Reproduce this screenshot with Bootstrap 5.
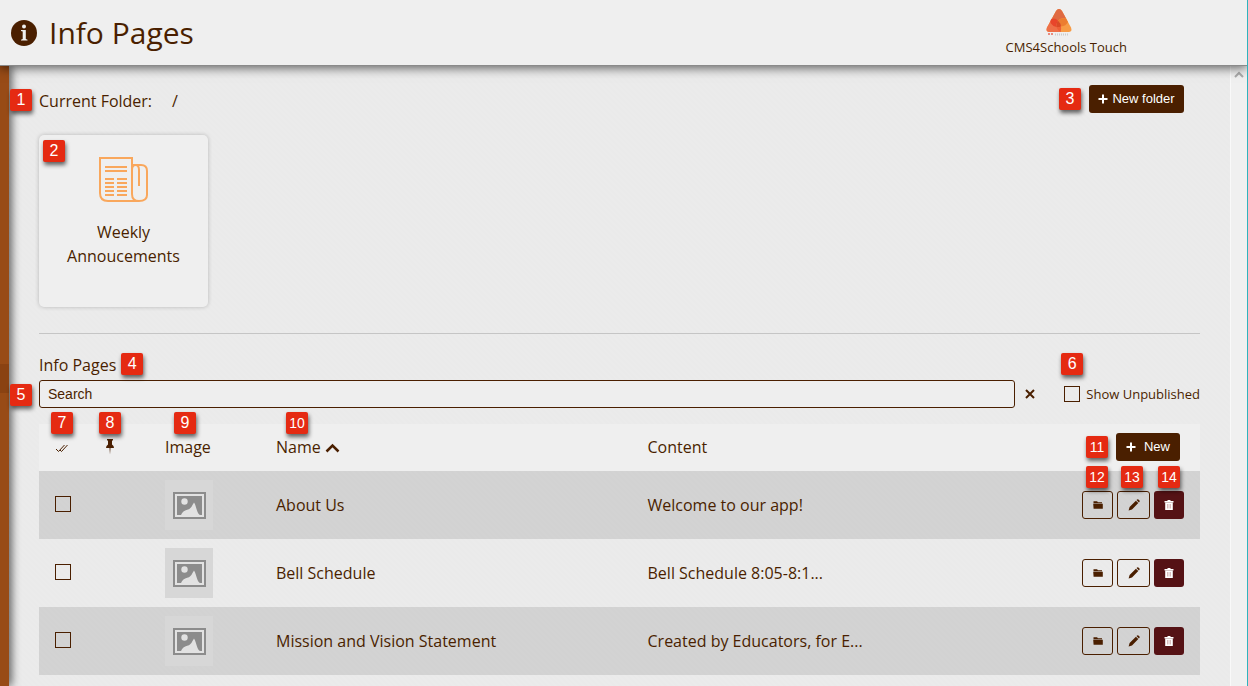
<!DOCTYPE html>
<html lang="en">
<head>
<meta charset="utf-8">
<meta name="viewport" content="width=device-width, initial-scale=1">
<title>Info Pages</title>
<link href="https://cdn.jsdelivr.net/npm/bootstrap@5.3.0/dist/css/bootstrap.min.css" rel="stylesheet">
<style>
  :root { --brown: #4a1f00; --rust: #984b16; --wine: #551215; }
  body {
    font: 16px/24px "Open Sans", "Noto Sans", sans-serif;
    color: var(--brown);
    background: repeating-linear-gradient(45deg, #ebebeb 0 2px, #eaeaea 2px 4px);
    border-right: 1px solid #2fb3bd;
    overflow: hidden;
  }
  .app-header { height: 66px; background: #efefef; border-bottom: 1px solid #8a8a8a; box-shadow: 0 2px 10px rgba(0,0,0,.6); z-index: 2; padding: 0 120px 0 11px; }
  .app-header h1 { font-size: 30px; line-height: 40px; font-weight: 400; }
  .brand-link { font-size: 13px; line-height: 18px; color: var(--brown); padding-bottom: 2px; }
  .brand-link svg { margin-right: 14px; }
  .side-rail { width: 9px; background: var(--rust); box-shadow: 2px 0 10px rgba(0,0,0,.7); padding-top: 298px; }
  .side-rail a { height: 29px; background: #8a4212; }
  .content-pane { padding: 19px 30px 0; }
  .scroll-gutter { width: 17px; background: #f0f0f0; border-left: 1px solid #f9f9f9; padding-top: 5px; }
  .ui-control { font-family: "Liberation Sans", Arial, sans-serif; font-size: 13px; line-height: 18px; height: 28px; border-radius: 3px; }
  .btn-brown { background: var(--brown); color: #fff; }
  .btn-line { border: 1px solid var(--brown); background: transparent; color: var(--brown); }
  .btn-wine { background: var(--wine); color: #fff; }
  .btn-brown:hover, .btn-wine:hover { background: var(--rust); color: #fff; }
  .row-actions { gap: 4px; }
  .row-actions .btn { display: flex; align-items: center; justify-content: center; }
  .btn-move { width: 31px; } .btn-edit { width: 33px; } .btn-trash { width: 30px; }
  .btn-new { width: 64px; } .btn-new-folder { width: 95px; }
  .folder-path { padding-left: 20px; }
  .callout-mark {
    font: 16px/22px "Liberation Sans", Arial, sans-serif;
    width: 22px; height: 22px; border-radius: 2px; text-align: center;
    background: #e52a12; color: #fff; box-shadow: 1px 3px 4px rgba(0,0,0,.6); z-index: 3;
  }
  .callout-mark.two-digit { font-size: 14px; }
  .mark-edge { left: -29px; top: 4px; }
  .mark-card { left: 4px; top: 5px; }
  .mark-head { top: -12px; left: 12px; }
  .mark-center-head { left: 10px; }
  .mark-image { left: 25px; }
  .mark-name { left: 26px; }
  .mark-above { left: 4px; top: -25px; }
  .folder-card { width: 169px; height: 172px; margin-top: 22px; padding: 21px 16px 0; background: #efefef; border-radius: 5px; box-shadow: 0 0 4px rgba(0,0,0,.22); color: var(--brown); }
  .divider { margin: 26px 0 0; border-color: #bbb; opacity: .8; }
  .section-head { margin-top: 19px; gap: 5px; }
  .section-head .callout-mark { margin-bottom: 2px; }
  .search-row { margin-top: 3px; }
  .search-box { border: 1px solid var(--brown); background: #eee; font-size: 14px; padding: 0 8px; color: var(--brown); }
  .search-box::placeholder { color: var(--brown); opacity: 1; }
  .clear-btn { width: 30px; }
  .tick { appearance: none; width: 16px; height: 16px; border: 1px solid var(--brown); background: transparent; margin: 0; flex: none; }
  .tick:checked { background: var(--brown); }
  .unpub { gap: 6px; margin-left: 19px; font-size: 13px; }
  .unpub .callout-mark { left: -3px; top: -29px; }
  .pages-table { table-layout: fixed; width: 100%; margin-top: 16px; }
  .pages-table th { font-weight: 400; height: 47px; background: #efefef; padding: 0 16px 2px; position: relative; }
  .pages-table td { height: 68px; padding: 0 16px; }
  .pages-table tbody .tick { margin-bottom: 2px; }
  .pages-table tbody tr:nth-child(odd) { background: rgba(0,0,0,.1); }
  .col-tick { width: 50px; } .col-pin { width: 60px; } .col-image { width: 111px; }
  .col-name { width: 32%; } .col-actions { width: 150px; }
  .thumb { width: 48px; height: 50px; background: #d7d7d7; }
</style>
</head>
<body class="d-flex flex-column vh-100">

<svg class="d-none" aria-hidden="true">
  <symbol id="i-plus" viewBox="0 0 10 10"><path d="M5 .5v9M.5 5h9" stroke="currentColor" stroke-width="2"/></symbol>
  <symbol id="i-folder" viewBox="0 0 10 10"><path d="M.5 1.2h3.6l.8 1H9v1H.5zM.2 3.8h9.6v5H.6z" fill="currentColor"/></symbol>
  <symbol id="i-pencil" viewBox="0 0 12 12"><path d="M.6 11.4l1-3.400 6.300-6.300 2.400 2.400-6.300 6.300zM8.500 1.100l.7-.6q.6-.4 1.200 0l1.100 1.100q.4.600 0 1.200l-.6.7z" fill="currentColor"/></symbol>
  <symbol id="i-trash" viewBox="0 0 10 10"><path d="M3.500 0h3v1H9.500v1.500H.5V1h3z" fill="currentColor"/><path d="M1.200 2.500h7.600V10H1.200z" fill="currentColor"/><path d="M3.500 4v4.500M5 4v4.500M6.500 4v4.500" stroke="#c9a0a0" stroke-width=".7"/></symbol>
  <symbol id="i-picture" viewBox="0 0 33 27"><path d="M1 1h31v25H1z" fill="#e2e2e2" stroke="#8c8c8c" stroke-width="2"/><path d="M4 4h25v19H4z" fill="#8c8c8c"/><circle cx="11.500" cy="9.500" r="3.200" fill="#e2e2e2"/><path d="M8 23c1-3 4-5 7-5.500 3-.5 4-4 6-7 1.500 2 2 5 3 8 .8 2.500 2 4.500 3.500 4.500z" fill="#e2e2e2"/></symbol>
</svg>

<header class="app-header d-flex align-items-center justify-content-between position-relative flex-shrink-0">
  <div class="d-flex align-items-center">
    <svg width="26" height="26" viewBox="0 0 26 26" class="me-2" aria-hidden="true"><circle cx="13" cy="13" r="13" fill="#4a1f00"/><circle cx="13" cy="6.500" r="2" fill="#efefef"/><path d="M10 10h4.800v9l1.700.7v.8h-6.500v-.8l1.700-.7v-7.500L10 11z" fill="#efefef"/></svg>
    <h1 class="m-0 ps-1">Info Pages</h1>
  </div>
  <a href="#" class="brand-link d-flex flex-column align-items-center text-decoration-none">
    <svg width="28" height="30" viewBox="0 0 28 30" aria-hidden="true">
      <path d="M14 1q1.800 0 3 2l9 16.500q1.600 4-2 4.500H4q-3.600-.5-2-4.500L11 3q1.200-2 3-2z" fill="#f79b45"/>
      <path d="M14 1q1.800 0 3 2l4 7.300q-5-.8-8 2.200-3-2-6.200-1.700L11 3q1.200-2 3-2z" fill="#df6a42"/>
      <path d="M6.800 10.800Q11 10 14 14.500 17 19 15.500 24H4q-3.600-.5-2-4.500z" fill="#ee7048"/>
      <path d="M6.800 10.800q4-.8 6.200 1.700-2 3-1.500 6.500-4-1-5.500-3.500t.8-4.700z" fill="#e8452a"/>
      <path d="M13 12.500q3.500-3 8-2.200l2 3.700q-2 4-7 4.500-.5-3-3-6z" fill="#ec7d30"/>
      <path d="M13 12.500q3 3 3 6-2.500 1.200-4.500.5-.5-4 1.500-6.500z" fill="#d94a26"/>
      <path d="M11.500 19q2.500.5 4.500-.5.5 3-.5 5.500-3-1.500-4-5z" fill="#ef5f36"/>
      <path d="M3 26h6" stroke="#e7604d" stroke-width="2" stroke-dasharray="2 1" opacity=".7"/><path d="M10 26.500h13" stroke="#ccc" stroke-width="2" stroke-dasharray="1 1"/>
    </svg>
    <span>CMS4Schools Touch</span>
  </a>
</header>

<div class="d-flex flex-grow-1">
  <nav class="side-rail flex-shrink-0" aria-label="Sections"><a href="#" class="d-block" aria-label="Info Pages"></a></nav>

  <main class="content-pane flex-grow-1">
    <div class="d-flex justify-content-between position-relative">
      <span class="callout-mark position-absolute mark-edge">1</span>
      <div class="d-flex align-items-center pt-1">Current Folder:<span class="folder-path">/</span></div>
      <div class="d-flex align-items-center gap-2 pe-3">
        <span class="callout-mark">3</span>
        <button type="button" class="btn ui-control btn-new-folder btn-brown border-0 p-0 d-flex align-items-center justify-content-center gap-1"><svg width="10" height="10"><use href="#i-plus"/></svg>New folder</button>
      </div>
    </div>

    <a href="#" class="folder-card d-block text-center text-decoration-none position-relative">
      <span class="callout-mark position-absolute mark-card">2</span>
      <svg width="50" height="48" viewBox="0 0 50 48" fill="none" stroke="#f9a75c" stroke-width="2" aria-hidden="true">
        <path d="M1 2h32v36q0 7 7 7H9q-8 0-8-8zM33 9h9q6 0 6 6v24q0 6-8 6M33 38V14q0-5 3.500-5T40 14v16"/>
        <path d="M6 11h22M6 15h22M6 23h9M6 27h9M6 31h9M6 35h9M6 39h9M18 23h10M18 27h10M18 31h10M18 35h10M18 39h10"/>
      </svg>
      <div class="mt-3">Weekly Annoucements</div>
    </a>

    <hr class="divider">

    <div class="section-head d-flex align-items-center"><label for="search">Info Pages</label><span class="callout-mark">4</span></div>

    <div class="search-row d-flex align-items-center position-relative">
      <span class="callout-mark position-absolute mark-edge">5</span>
      <input id="search" type="text" class="search-box ui-control flex-grow-1" placeholder="Search">
      <button type="button" class="btn clear-btn p-0 border-0 d-flex align-items-center justify-content-center" aria-label="Clear search"><svg width="10" height="10" viewBox="0 0 10 10"><path d="M1 1l8 8M9 1L1 9" stroke="#4a1f00" stroke-width="2"/></svg></button>
      <label class="unpub d-flex align-items-center position-relative text-nowrap"><span class="callout-mark position-absolute">6</span><input type="checkbox" class="tick">Show Unpublished</label>
    </div>

    <table class="pages-table">
      <thead>
        <tr>
          <th class="col-tick" scope="col"><span class="callout-mark position-absolute mark-head">7</span><svg width="14" height="10" viewBox="0 0 14 10" fill="none" stroke="#4a1f00" aria-label="Select"><path d="M1 6l2.500 2.500L9.500 2M5 7l1.500 1.500L12.500 2"/></svg></th>
          <th class="col-pin" scope="col"><span class="callout-mark position-absolute mark-head mark-center-head">8</span><svg width="10" height="16" viewBox="0 0 10 16" fill="#4a1f00" class="d-block" aria-label="Pinned"><path d="M2 0h6v1.500H7V5.500Q9 6.500 9 9H1q0-2.500 2-3.500V1.500H2zM4.500 9h1L5 15.500z"/></svg></th>
          <th class="col-image" scope="col"><span class="callout-mark position-absolute mark-head mark-image">9</span>Image</th>
          <th class="col-name" scope="col"><span class="callout-mark two-digit position-absolute mark-head mark-name">10</span>Name<svg width="15" height="10" viewBox="0 0 15 10" fill="none" class="ms-1" aria-label="Sorted ascending"><path d="M1.500 8.500l6-6 6 6" stroke="#4a1f00" stroke-width="2.500"/></svg></th>
          <th scope="col">Content</th>
          <th class="col-actions" scope="col">
            <div class="d-flex align-items-center justify-content-end gap-2 pe-1">
              <span class="callout-mark two-digit">11</span>
              <button type="button" class="btn ui-control btn-new btn-brown border-0 p-0 d-flex align-items-center justify-content-center gap-2"><svg width="10" height="10"><use href="#i-plus"/></svg>New</button>
            </div>
          </th>
        </tr>
      </thead>
      <tbody>
        <tr>
          <td><input type="checkbox" class="tick d-block" aria-label="Select About Us"></td><td></td>
          <td><div class="thumb d-flex align-items-center justify-content-center"><svg width="33" height="27"><use href="#i-picture"/></svg></div></td>
          <td>About Us</td><td>Welcome to our app!</td>
          <td><div class="row-actions d-flex justify-content-end">
            <div class="position-relative"><span class="callout-mark two-digit position-absolute mark-above">12</span><button type="button" class="btn ui-control btn-line btn-move p-0" aria-label="Move"><svg width="12" height="10"><use href="#i-folder"/></svg></button></div>
            <div class="position-relative"><span class="callout-mark two-digit position-absolute mark-above">13</span><button type="button" class="btn ui-control btn-line btn-edit p-0" aria-label="Edit"><svg width="14" height="12"><use href="#i-pencil"/></svg></button></div>
            <div class="position-relative"><span class="callout-mark two-digit position-absolute mark-above">14</span><button type="button" class="btn ui-control btn-wine btn-trash border-0 p-0" aria-label="Delete"><svg width="14" height="10"><use href="#i-trash"/></svg></button></div>
          </div></td>
        </tr>
        <tr>
          <td><input type="checkbox" class="tick d-block" aria-label="Select Bell Schedule"></td><td></td>
          <td><div class="thumb d-flex align-items-center justify-content-center"><svg width="33" height="27"><use href="#i-picture"/></svg></div></td>
          <td>Bell Schedule</td><td>Bell Schedule 8:05-8:1...</td>
          <td><div class="row-actions d-flex justify-content-end">
            <button type="button" class="btn ui-control btn-line btn-move p-0" aria-label="Move"><svg width="12" height="10"><use href="#i-folder"/></svg></button>
            <button type="button" class="btn ui-control btn-line btn-edit p-0" aria-label="Edit"><svg width="14" height="12"><use href="#i-pencil"/></svg></button>
            <button type="button" class="btn ui-control btn-wine btn-trash border-0 p-0" aria-label="Delete"><svg width="14" height="10"><use href="#i-trash"/></svg></button>
          </div></td>
        </tr>
        <tr>
          <td><input type="checkbox" class="tick d-block" aria-label="Select Mission and Vision Statement"></td><td></td>
          <td><div class="thumb d-flex align-items-center justify-content-center"><svg width="33" height="27"><use href="#i-picture"/></svg></div></td>
          <td>Mission and Vision Statement</td><td>Created by Educators, for E...</td>
          <td><div class="row-actions d-flex justify-content-end">
            <button type="button" class="btn ui-control btn-line btn-move p-0" aria-label="Move"><svg width="12" height="10"><use href="#i-folder"/></svg></button>
            <button type="button" class="btn ui-control btn-line btn-edit p-0" aria-label="Edit"><svg width="14" height="12"><use href="#i-pencil"/></svg></button>
            <button type="button" class="btn ui-control btn-wine btn-trash border-0 p-0" aria-label="Delete"><svg width="14" height="10"><use href="#i-trash"/></svg></button>
          </div></td>
        </tr>
      </tbody>
    </table>
  </main>

  <div class="scroll-gutter text-center flex-shrink-0 lh-1"><svg width="10" height="7" viewBox="0 0 10 7" fill="none" class="d-block mx-auto"><path d="M1 6l4-4 4 4" stroke="#aaa" stroke-width="2"/></svg></div>
</div>

<script src="https://cdn.jsdelivr.net/npm/bootstrap@5.3.0/dist/js/bootstrap.bundle.min.js"></script>
</body>
</html>
